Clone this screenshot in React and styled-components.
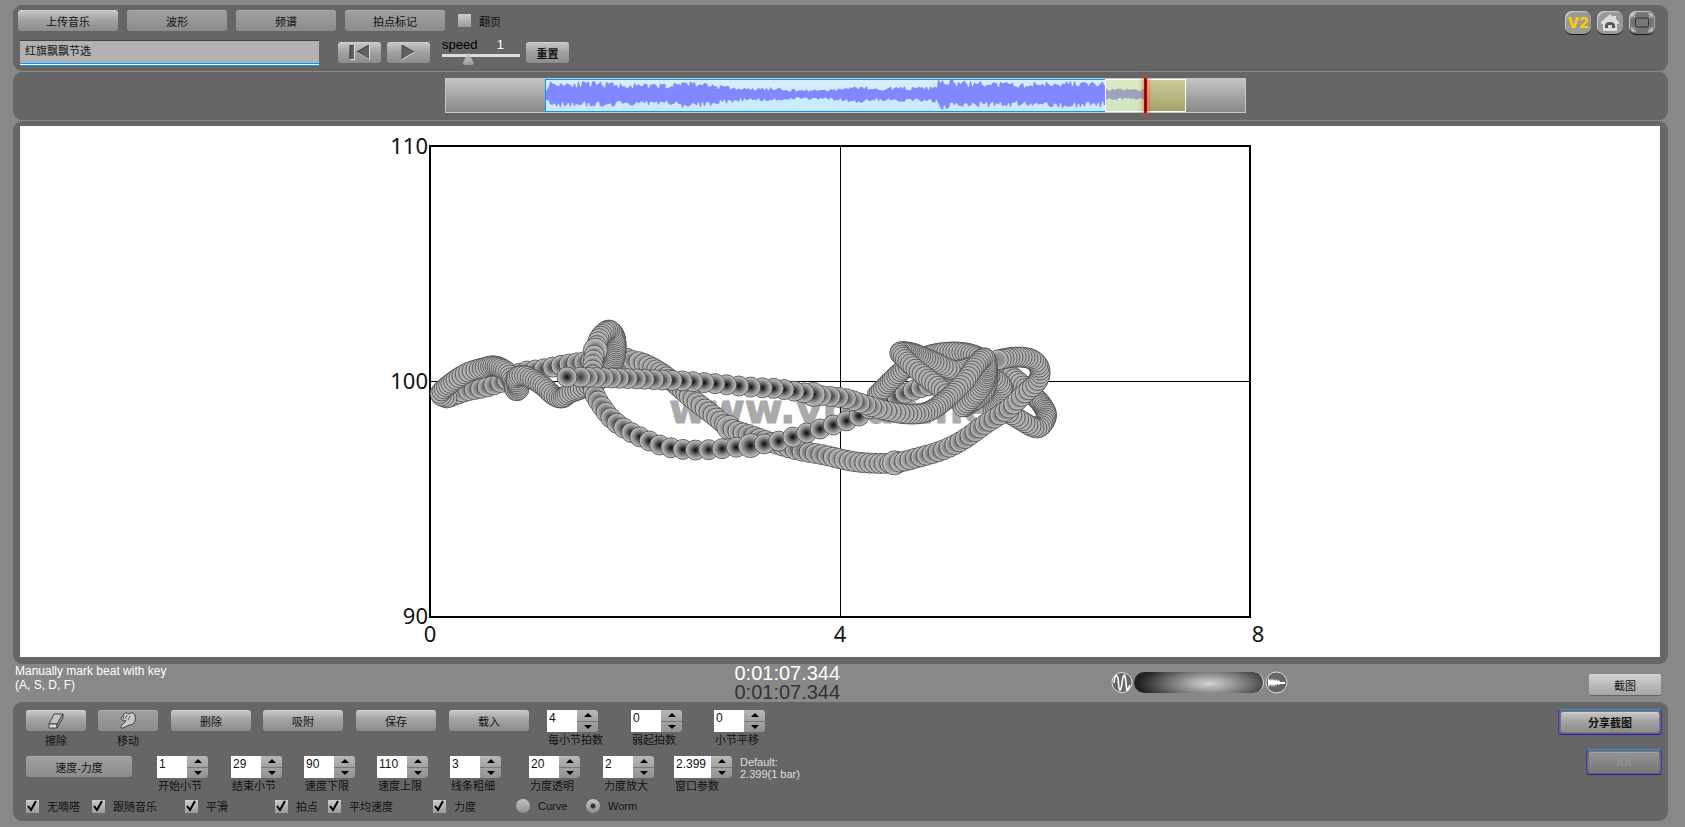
import styled, { createGlobalStyle } from "styled-components";

const GlobalStyle = createGlobalStyle`
  * {
    box-sizing: border-box;
  }
  body {
    margin: 0;
    background: #888;
    color: #111;
    font-family: "Liberation Sans", "Noto Sans CJK SC", sans-serif;
    font-size: 11px;
  }
  button, input {
    font-family: inherit;
    font-size: 11px;
    color: inherit;
    margin: 0;
    padding: 0;
  }
`;

const Page = styled.main`
  display: flex;
  flex-direction: column;
  padding: 5px 17px 7px 13px;
`;

const Panel = styled.section`
  background: #666;
  border-radius: 9px;
`;

const TopPanel = styled(Panel)`
  display: flex;
  justify-content: space-between;
  height: 66px;
  padding: 5px 13px 0 5px;
  margin-bottom: 1px;
`;

const TopTools = styled.div`
  display: flex;
  flex-direction: column;
  gap: 9px;
`;

const ButtonRow = styled.div`
  display: flex;
  align-items: center;
  gap: 9px;
`;

const PlayerRow = styled.div`
  display: flex;
  align-items: flex-start;
  padding-left: 2px;
`;

const Button = styled.button`
  display: flex;
  align-items: center;
  justify-content: center;
  width: ${(p) => p.$w || 80}px;
  height: 21px;
  border: 0;
  border-radius: 3px;
  background: ${(p) =>
    p.$dim
      ? "linear-gradient(#a0a0a0, #8c8c8c)"
      : "linear-gradient(#cacaca, #a4a4a4 45%, #8c8c8c)"};
  box-shadow: inset 0 1px 0 rgba(255, 255, 255, 0.15);
  font-weight: ${(p) => (p.$bold ? "bold" : "normal")};
`;

const TitleInput = styled.input`
  width: 299px;
  height: 26px;
  padding: 0 5px 7px;
  margin-right: 19px;
  border: 0;
  border-top: 1px solid #444;
  border-bottom: 1px solid #0a96f5;
  background: linear-gradient(#b2b2b2 22px, #0a96f5 22px, #0a96f5 23px, #fff 23px);
`;

const Transport = styled.div`
  display: flex;
  gap: 6px;
  padding-top: 2px;
  margin-right: 12px;
`;

const Speed = styled.label`
  display: flex;
  flex-direction: column;
  width: 78px;
  margin-right: 6px;
`;

const SpeedText = styled.span`
  display: flex;
  justify-content: space-between;
  padding-right: 16px;
  font-size: 13px;
  line-height: 10px;
  padding-bottom: 3px;
  color: #000;
`;

const SpeedValue = styled.span`
  color: #fff;
`;

const SpeedRange = styled.input`
  appearance: none;
  width: 78px;
  height: 12px;
  background: linear-gradient(#ddd, #ddd) no-repeat 0 1px / 100% 3px;
  &::-webkit-slider-thumb {
    appearance: none;
    width: 11px;
    height: 12px;
    background: linear-gradient(#ccc, #999);
    clip-path: polygon(50% 0, 100% 80%, 90% 100%, 10% 100%, 0 80%);
  }
`;

const ResetWrap = styled.div`
  padding-top: 2px;
`;

const CheckLabel = styled.label`
  display: flex;
  align-items: center;
  gap: 8px;
  height: 14px;
  white-space: nowrap;
`;

const FlipWrap = styled.div`
  margin-left: 4px;
`;

const CheckStack = styled.span`
  display: grid;
  > * {
    grid-area: 1 / 1;
  }
  svg {
    pointer-events: none;
  }
`;

const CheckBox = styled.input`
  appearance: none;
  width: 13px;
  height: 13px;
  background: linear-gradient(#ccc, #999);
`;

const Radio = styled.input`
  appearance: none;
  width: 14px;
  height: 14px;
  border-radius: 50%;
  background: linear-gradient(#c4c4c4, #8e8e8e);
  &:checked {
    background: radial-gradient(circle, #333 2px, transparent 3px), linear-gradient(#c4c4c4, #8e8e8e);
  }
`;

const IconGroup = styled.div`
  display: flex;
  gap: 6px;
  padding-top: 1px;
`;

const IconButton = styled.button`
  display: flex;
  align-items: center;
  justify-content: center;
  width: 26px;
  height: 24px;
  border: 0;
  border-bottom: 1px solid #111;
  border-radius: 7px;
  background: ${(p) => (p.$dark ? "#747474" : "#999")};
  box-shadow: inset 2px 2px 1px -1px #ccc, inset -1px 0 1px ${(p) => (p.$dark ? "#aaa" : "#999")};
  color: #ffcc00;
  font-family: Inter, sans-serif;
  font-size: 15px;
  font-weight: 800;
`;

const WavePanel = styled(Panel)`
  display: flex;
  justify-content: center;
  height: 48px;
  padding: 6px 0 0 10px;
  margin-bottom: 1px;
`;

const WaveTrack = styled.div`
  position: relative;
  width: 801px;
  height: 35px;
  padding: 0 0 0 99px;
  border: 1px solid #c8c8c8;
  background: linear-gradient(#c4c4c4, #888);
`;

const WaveClip = styled.div`
  width: 600px;
  height: 33px;
  border: 1px solid #0a96f5;
  border-right: 0;
  background: linear-gradient(#d6efff, #c8e8fd);
  svg {
    display: block;
  }
`;

const WaveWindow = styled.div`
  position: absolute;
  left: 659px;
  top: 0;
  width: 81px;
  height: 33px;
  border: 1px solid #fff;
  background: rgba(226, 226, 50, 0.3);
`;

const Playhead = styled.div`
  position: absolute;
  left: 698px;
  top: -1px;
  width: 3px;
  height: 35px;
  border: solid #c00;
  border-width: 2px 1px;
  background: #300;
  box-shadow: 0 0 5px 1px rgba(255, 70, 40, 0.7);
`;

const ChartPanel = styled(Panel)`
  padding: 5px 8px 7px 7px;
`;

const Canvas = styled.div`
  display: flex;
  justify-content: center;
  background: #fff;
  svg {
    display: block;
  }
`;

const StatusBar = styled.div`
  display: grid;
  grid-template-columns: 719fr 376fr 478fr auto;
  height: 38px;
  padding: 0 7px 0 2px;
`;

const Hint = styled.p`
  margin: 0;
  color: #fff;
  font-size: 12px;
  line-height: 14px;
`;

const Times = styled.div`
  font-size: 20px;
  line-height: 19px;
  color: #fff;
`;

const TimeShadow = styled.div`
  color: #333;
`;

const Mixer = styled.div`
  display: flex;
  align-items: center;
  gap: 1px;
  height: 37px;
`;

const MixRange = styled.input`
  appearance: none;
  width: 130px;
  height: 21px;
  border-radius: 11px;
  border-right: 1px solid #ddd;
  background: radial-gradient(ellipse 70px 22px at 58% 55%, #d4d4d4, #777 55%, #222);
  &::-webkit-slider-thumb {
    appearance: none;
    width: 1px;
    height: 1px;
  }
`;

const ShotWrap = styled.div`
  padding-top: 10px;
`;

const ShotButton = styled(Button)`
  height: 22px;
  border-radius: 2px;
  border-bottom: 1px solid #666;
  background: linear-gradient(#d2d2d2, #a4a4a4);
`;

const BottomPanel = styled(Panel)`
  display: flex;
  justify-content: space-between;
  height: 119px;
  padding: 7px 6px 0 13px;
`;

const Settings = styled.div`
  display: flex;
  flex-direction: column;
  padding-top: 1px;
`;

const SettingsRow = styled.div`
  display: grid;
  grid-template-columns: ${(p) => p.$cols};
  align-items: start;
  height: ${(p) => p.$h}px;
`;

const Tool = styled.div`
  display: flex;
  flex-direction: column;
  align-items: center;
  width: 60px;
  line-height: 16px;
  gap: 2px;
`;

const Field = styled.label`
  display: flex;
  flex-direction: column;
  line-height: 16px;
  white-space: nowrap;
`;

const FieldName = styled.span`
  padding-left: 1px;
`;

const Stepper = styled.span`
  display: flex;
  height: 22px;
`;

const NumberInput = styled.input`
  width: ${(p) => (p.$wide ? 37 : 30)}px;
  height: 22px;
  padding: 0 0 7px 2px;
  border: 0;
  background: #fff;
  font-size: 12px;
`;

const StepButtons = styled.span`
  display: flex;
  flex-direction: column;
  width: 21px;
  height: 22px;
  border-radius: 0 3px 3px 0;
  overflow: hidden;
`;

const StepButton = styled.button`
  display: flex;
  flex: 1;
  align-items: center;
  justify-content: center;
  border: 0;
  border-bottom: ${(p) => (p.$up ? "1px solid #777" : "0")};
  background: ${(p) => (p.$up ? "linear-gradient(#b8b8b8, #a2a2a2)" : "linear-gradient(#a2a2a2, #929292)")};
`;

const DefaultNote = styled.div`
  color: #ddd;
  line-height: 12px;
`;

const Actions = styled.div`
  display: flex;
  flex-direction: column;
  align-items: flex-end;
  gap: 14px;
`;

const Glow = styled.div`
  padding: 1px;
  border: 1px solid;
  border-color: #2a8cff #3c32dc #3214b4;
  border-radius: 3px;
`;

const ShareButton = styled(Button)`
  height: 22px;
  border: 1px solid #777;
  ${(p) => p.disabled && "background: linear-gradient(#949494, #787878); color: #999;"}
`;

// catmull-rom over [x, y, step] knots, returns evenly stepped beads
function beads(points) {
  const out = [];
  let left = 0;
  for (let i = 0; i < points.length - 1; i++) {
    const a = points[Math.max(i - 1, 0)];
    const b = points[i];
    const c = points[i + 1];
    const d = points[Math.min(i + 2, points.length - 1)];
    let prev = b;
    for (let k = 1; k <= 60; k++) {
      const t = k / 60;
      const at = (n) =>
        0.5 *
        (2 * b[n] +
          (c[n] - a[n]) * t +
          (2 * a[n] - 5 * b[n] + 4 * c[n] - d[n]) * t * t +
          (3 * b[n] - a[n] - 3 * c[n] + d[n]) * t * t * t);
      const cur = [at(0), at(1)];
      left -= Math.hypot(cur[0] - prev[0], cur[1] - prev[1]);
      if (left <= 0) {
        const step = b[2] + (c[2] - b[2]) * t;
        out.push({ x: cur[0], y: cur[1], step });
        left += step;
      }
      prev = cur;
    }
  }
  return out;
}

const STRANDS = [
  [[607, 244, 4], [620, 249, 4], [643, 269, 3], [654, 282, 2], [656, 292, 2], [647, 302, 3], [627, 292, 4], [610, 281, 4]],
  [[603, 283, 3], [612, 269, 2], [611, 258, 3], [600, 250, 3]],
  [[60, 271, 4], [77, 265, 6], [97, 261, 7], [117, 254, 7], [133, 246, 8], [153, 243, 9], [173, 239, 8], [193, 236, 7], [210, 234, 7], [237, 234, 7], [253, 237, 5], [270, 246, 4], [283, 256, 4], [300, 271, 5], [323, 289, 5], [340, 302, 5], [360, 309, 6], [383, 317, 6], [407, 324, 7], [434, 329, 6], [467, 336, 5], [503, 337, 5], [530, 331, 6], [553, 324, 6], [573, 314, 6], [597, 297, 6], [617, 284, 6], [633, 269, 5], [647, 256, 4], [650, 244, 3], [643, 234, 3], [627, 231, 3], [607, 234, 3]],
  [[57, 272, 3], [50, 268, 3], [60, 258, 3], [77, 247, 4], [93, 242, 3], [105, 240, 2], [117, 246, 3], [123, 256, 3], [125, 264, 2], [129, 263, 2], [126, 252, 2], [136, 250, 3], [153, 260, 3], [163, 269, 3], [172, 272, 2], [180, 267, 3], [193, 262, 3], [213, 251, 3], [223, 237, 2], [226, 224, 2], [225, 211, 2], [219, 204, 2], [210, 211, 3], [206, 222, 5], [203, 237, 5], [203, 254, 5], [205, 269, 6], [220, 291, 8], [237, 304, 9], [257, 314, 11], [277, 321, 12], [302, 324, 13], [328, 323, 14], [357, 320, 14], [385, 316, 15], [413, 308, 14], [440, 300, 14], [467, 291, 13], [483, 281, 10], [508, 270, 9], [530, 262, 8], [547, 257, 5], [563, 247, 4], [580, 241, 3]],
  [[487, 269, 3], [513, 244, 3], [537, 230, 3], [567, 226, 3], [590, 232, 3], [598, 247, 3], [593, 267, 3], [573, 282, 3]],
  [[580, 241, 4], [563, 244, 4], [540, 234, 3], [522, 227, 2], [510, 226, 2], [513, 231, 3], [527, 244, 4], [553, 264, 4], [565, 274, 3]],
  [[573, 281, 3], [590, 264, 3], [597, 247, 2], [595, 232, 2], [587, 238, 3], [573, 257, 4], [553, 276, 3], [537, 286, 3], [517, 288, 4], [493, 284, 5], [470, 277, 7], [453, 272, 8], [427, 269, 9], [390, 263, 11], [360, 261, 12], [307, 256, 11], [273, 254, 9], [223, 252, 8], [187, 251, 7]],
];

// accents on the bar lines are drawn a little larger
const ACCENTS = [[357, 320], [503, 337], [206, 222], [237, 234], [340, 302], [423, 269]];

const SHADES = ["#8a8a8a", "#767676", "#606060", "#4c4c4c", "#383838", "#222", "#080808"];

function shadeFor(step) {
  return Math.max(0, Math.min(6, Math.round((step - 3) * 0.9)));
}

function radiusFor(b) {
  const near = ACCENTS.some(([x, y]) => Math.hypot(b.x - x, b.y - y) < b.step / 2);
  return near ? 12 : 10;
}

function WormChart() {
  return (
    <svg width="900" height="531" viewBox="0 0 900 531">
      <defs>
        {SHADES.map((c, i) => (
          <radialGradient id={"bead" + i} key={c}>
            <stop offset="0" stopColor={c} />
            <stop offset="0.6" stopColor={i > 2 ? "#8a8a8a" : "#949494"} />
            <stop offset="1" stopColor="#c8c8c8" />
          </radialGradient>
        ))}
      </defs>
      <text x="450" y="297" textAnchor="middle" fill="#aaa" stroke="#aaa" strokeWidth="1" fontSize="41" fontWeight="bold" fontFamily="DejaVu Sans, sans-serif">
        www.vmus.net
      </text>
      <path d="M450.500 20V491M40 255.500H860" stroke="#000" strokeWidth="1" fill="none" />
      <rect x="40" y="20" width="820" height="471" fill="none" stroke="#000" strokeWidth="2" />
      {STRANDS.map((s, n) => (
        <g key={n} stroke="#444" strokeWidth="0.8">
          {beads(s).map((b, i) => (
            <circle key={i} cx={b.x} cy={b.y} r={radiusFor(b)} fill={`url(#bead${shadeFor(b.step)})`} />
          ))}
        </g>
      ))}
      <circle cx="177" cy="251" r="10" fill="url(#bead6)" stroke="#444" strokeWidth="0.8" />
      <g fontFamily="Noto Sans, sans-serif" fontSize="22" fill="#111">
        <g textAnchor="end">
          <text x="38" y="28">110</text>
          <text x="38" y="263">100</text>
          <text x="38" y="498">90</text>
        </g>
        <g textAnchor="middle">
          <text x="40" y="516">0</text>
          <text x="450" y="516">4</text>
          <text x="868" y="516">8</text>
        </g>
      </g>
    </svg>
  );
}

const ENVELOPE = [[0, 6], [4, 13], [58, 12], [75, 11], [96, 10], [132, 11], [136, 15], [146, 13], [165, 11], [190, 7], [205, 6], [225, 7], [240, 5], [270, 5], [295, 6], [312, 9], [330, 6], [350, 8], [370, 7], [391, 8], [392, 15], [415, 13], [455, 12], [480, 11], [500, 13], [525, 13], [559, 12], [560, 6], [600, 5]];

function wavePath() {
  let seed = 11;
  const rand = () => {
    seed = (seed * 16807) % 2147483647;
    return seed / 2147483647;
  };
  const top = [];
  const bottom = [];
  let up = 0;
  let down = 0;
  for (let x = 0; x < 599; x++) {
    const i = ENVELOPE.findIndex((e) => e[0] > x);
    const [x0, y0] = ENVELOPE[i - 1];
    const [x1, y1] = ENVELOPE[i];
    const amp = y0 + ((y1 - y0) * (x - x0)) / (x1 - x0);
    // hold each level for two pixels
    if (x % 2 === 0) {
      up = 0.58 + rand() * 0.5;
      down = 0.56 + rand() * 0.5;
    }
    top.push(`${x} ${(14.5 - amp * up).toFixed(1)}`);
    bottom.unshift(`${x} ${(14.5 + amp * down).toFixed(1)}`);
  }
  return "M" + top.concat(bottom).join("L") + "Z";
}

const WAVE = wavePath();

function Check({ id, label, checked }) {
  return (
    <CheckLabel htmlFor={id}>
      <CheckStack>
        <CheckBox type="checkbox" id={id} defaultChecked={checked} />
        {checked && (
          <svg width="13" height="13" viewBox="0 0 13 13">
            <path d="M2 6l3 4 5-9" fill="none" stroke="#000" strokeWidth="2" />
          </svg>
        )}
      </CheckStack>
      {label}
    </CheckLabel>
  );
}

function Spinner({ label, value, wide }) {
  return (
    <Field>
      <Stepper>
        <NumberInput defaultValue={value} $wide={wide} />
        <StepButtons>
          <StepButton $up aria-label={label + " +"}>
            <svg width="8" height="4" viewBox="0 0 8 4"><path d="M0 4l4-4 4 4z" /></svg>
          </StepButton>
          <StepButton aria-label={label + " -"}>
            <svg width="8" height="4" viewBox="0 0 8 4"><path d="M0 0l4 4 4-4z" /></svg>
          </StepButton>
        </StepButtons>
      </Stepper>
      <FieldName>{label}</FieldName>
    </Field>
  );
}

function App() {
  return (
    <>
      <GlobalStyle />
      <Page>
        <TopPanel>
          <TopTools>
            <ButtonRow>
              <Button $w={100}>上传音乐</Button>
              <Button $w={100} $dim>波形</Button>
              <Button $w={100} $dim>频谱</Button>
              <Button $w={100} $dim>拍点标记</Button>
              <FlipWrap>
                <Check id="flip" label="翻页" />
              </FlipWrap>
            </ButtonRow>
            <PlayerRow>
              <TitleInput defaultValue="红旗飘飘节选" aria-label="曲名" />
              <Transport>
                <Button $w={43} aria-label="start">
                  <svg width="22" height="15" viewBox="0 0 22 15">
                    <path d="M1 0h5v15H1zM21 0v15L8 7.500z" fill="#ddd" />
                    <path d="M1 0h4v14H1zM20 0v14L8 7z" fill="#606060" />
                    <path d="M1 14V0h4M20 0L8 7" stroke="#333" fill="none" />
                  </svg>
                </Button>
                <Button $w={43} aria-label="play">
                  <svg width="15" height="15" viewBox="0 0 15 15">
                    <path d="M1 0l13 7.500L1 15z" fill="#ddd" />
                    <path d="M1 0l12 7L1 14z" fill="#606060" />
                    <path d="M1 14V0l12 7" stroke="#444" fill="none" />
                  </svg>
                </Button>
              </Transport>
              <Speed>
                <SpeedText>
                  speed <SpeedValue>1</SpeedValue>
                </SpeedText>
                <SpeedRange type="range" min="0" max="100" defaultValue="31" />
              </Speed>
              <ResetWrap>
                <Button $w={43} $bold>重置</Button>
              </ResetWrap>
            </PlayerRow>
          </TopTools>
          <IconGroup>
            <IconButton>V2</IconButton>
            <IconButton aria-label="home">
              <svg width="20" height="19" viewBox="0 0 20 19">
                <path d="M10 1L1 9v2h2v7h14v-7h2V9l-3-3V3h-3v1z" fill="#ddd" />
                <path d="M5 15v-2q0-4 5-4t5 4v2h-3v-3H8v3z" fill="#555" />
              </svg>
            </IconButton>
            <IconButton $dark aria-label="fullscreen">
              <svg width="22" height="19" viewBox="0 0 22 19" fill="none">
                <rect x="4.500" y="5" width="13" height="9" rx="2" fill="#777" stroke="#333" />
                <path d="M1 5V1h4M1 1l3 3M17 1h4v4M21 1l-3 3M1 14v4h4M1 18l3-3M21 14v4h-4M21 18l-3-3" stroke="#ddd" />
              </svg>
            </IconButton>
          </IconGroup>
        </TopPanel>

        <WavePanel>
          <WaveTrack>
            <WaveClip>
              <svg width="599" height="31" viewBox="0 0 599 31">
                <path d={WAVE} fill="#8088ff" />
              </svg>
            </WaveClip>
            <WaveWindow />
            <Playhead />
          </WaveTrack>
        </WavePanel>

        <ChartPanel>
          <Canvas>
            <WormChart />
          </Canvas>
        </ChartPanel>

        <StatusBar>
          <Hint>
            Manually mark beat with key
            <br />
            (A, S, D, F)
          </Hint>
          <Times>
            0:01:07.344
            <TimeShadow>0:01:07.344</TimeShadow>
          </Times>
          <Mixer>
            <svg width="22" height="23" viewBox="0 0 22 23" fill="none" stroke="#fff">
              <circle cx="11" cy="11.500" r="10" fill="#666" stroke="#ddd" />
              <path d="M3 12C4 1 7 3 7.500 12s2 10 3.500 0 3-11 4 0 1 8 4 2" strokeWidth="1.600" />
            </svg>
            <MixRange type="range" aria-label="mix" />
            <svg width="23" height="23" viewBox="0 0 23 23">
              <circle cx="11.500" cy="11.500" r="10.500" fill="#666" stroke="#ddd" />
              <path d="M3 6l1 3 1-1 1 2 1-3 1 3 1-2 1 2 1-2 1 2 2-1 1 2h5v2h-5l-1 1-2-1-1 2-1-2-1 3-1-3-1 3-1-3-1 2-1-1-1 3z" fill="#fff" />
            </svg>
          </Mixer>
          <ShotWrap>
            <ShotButton $w={72}>截图</ShotButton>
          </ShotWrap>
        </StatusBar>

        <BottomPanel>
          <Settings>
            <SettingsRow $h={46} $cols="72px 73px 92px 93px 93px 98px 84px 83px auto">
              <Tool>
                <Button $w={60} aria-label="擦除">
                  <svg width="18" height="16" viewBox="0 0 18 16" stroke="#444" strokeLinejoin="round">
                    <path d="M7 1h9l-6 10H2z" fill="#c4c4c4" />
                    <path d="M2 11h8v4H2z" fill="#ddd" />
                    <path d="M16 1v4l-6 10v-4z" fill="#999" />
                  </svg>
                </Button>
                擦除
              </Tool>
              <Tool>
                <Button $w={60} $dim aria-label="移动">
                  <svg width="18" height="17" viewBox="0 0 18 17" stroke="#444" strokeLinejoin="round" fill="#c8c8c8">
                    <path d="M2 16q-1-2 1-3l4-4-4-1q-2-2 0-3l2-3q1-2 3-1l2 1q2-2 4-1l2 2q1 3 0 6-1 4-5 4l-3 1-4 2z" />
                    <path d="M5 4l-1 3M8 3L6 7M11 4L9 8" fill="none" strokeWidth="0.800" />
                  </svg>
                </Button>
                移动
              </Tool>
              <Button>删除</Button>
              <Button>吸附</Button>
              <Button>保存</Button>
              <Button>载入</Button>
              <Spinner label="每小节拍数" value="4" />
              <Spinner label="弱起拍数" value="0" />
              <Spinner label="小节平移" value="0" />
            </SettingsRow>
            <SettingsRow $h={43} $cols="131px 74px 73px 73px 73px 79px 74px 71px 66px auto">
              <Button $w={106} $dim>速度-力度</Button>
              <Spinner label="开始小节" value="1" />
              <Spinner label="结束小节" value="29" />
              <Spinner label="速度下限" value="90" />
              <Spinner label="速度上限" value="110" />
              <Spinner label="线条粗细" value="3" />
              <Spinner label="力度透明" value="20" />
              <Spinner label="力度放大" value="2" />
              <Spinner label="窗口参数" value="2.399" wide />
              <DefaultNote>
                Default:
                <br />
                2.399(1 bar)
              </DefaultNote>
            </SettingsRow>
            <SettingsRow $h={14} $cols="66px 93px 90px 53px 105px 83px 70px auto">
              <Check id="tick" label="无嘀嗒" checked />
              <Check id="follow" label="跟随音乐" checked />
              <Check id="smooth" label="平滑" checked />
              <Check id="beat" label="拍点" checked />
              <Check id="avg" label="平均速度" checked />
              <Check id="force" label="力度" checked />
              <CheckLabel>
                <Radio type="radio" name="mode" />
                Curve
              </CheckLabel>
              <CheckLabel>
                <Radio type="radio" name="mode" defaultChecked />
                Worm
              </CheckLabel>
            </SettingsRow>
          </Settings>
          <Actions>
            <Glow>
              <ShareButton $w={100} $bold>分享截图</ShareButton>
            </Glow>
            <Glow>
              <ShareButton $w={72} disabled>IOI</ShareButton>
            </Glow>
          </Actions>
        </BottomPanel>
      </Page>
    </>
  );
}

export default App;
